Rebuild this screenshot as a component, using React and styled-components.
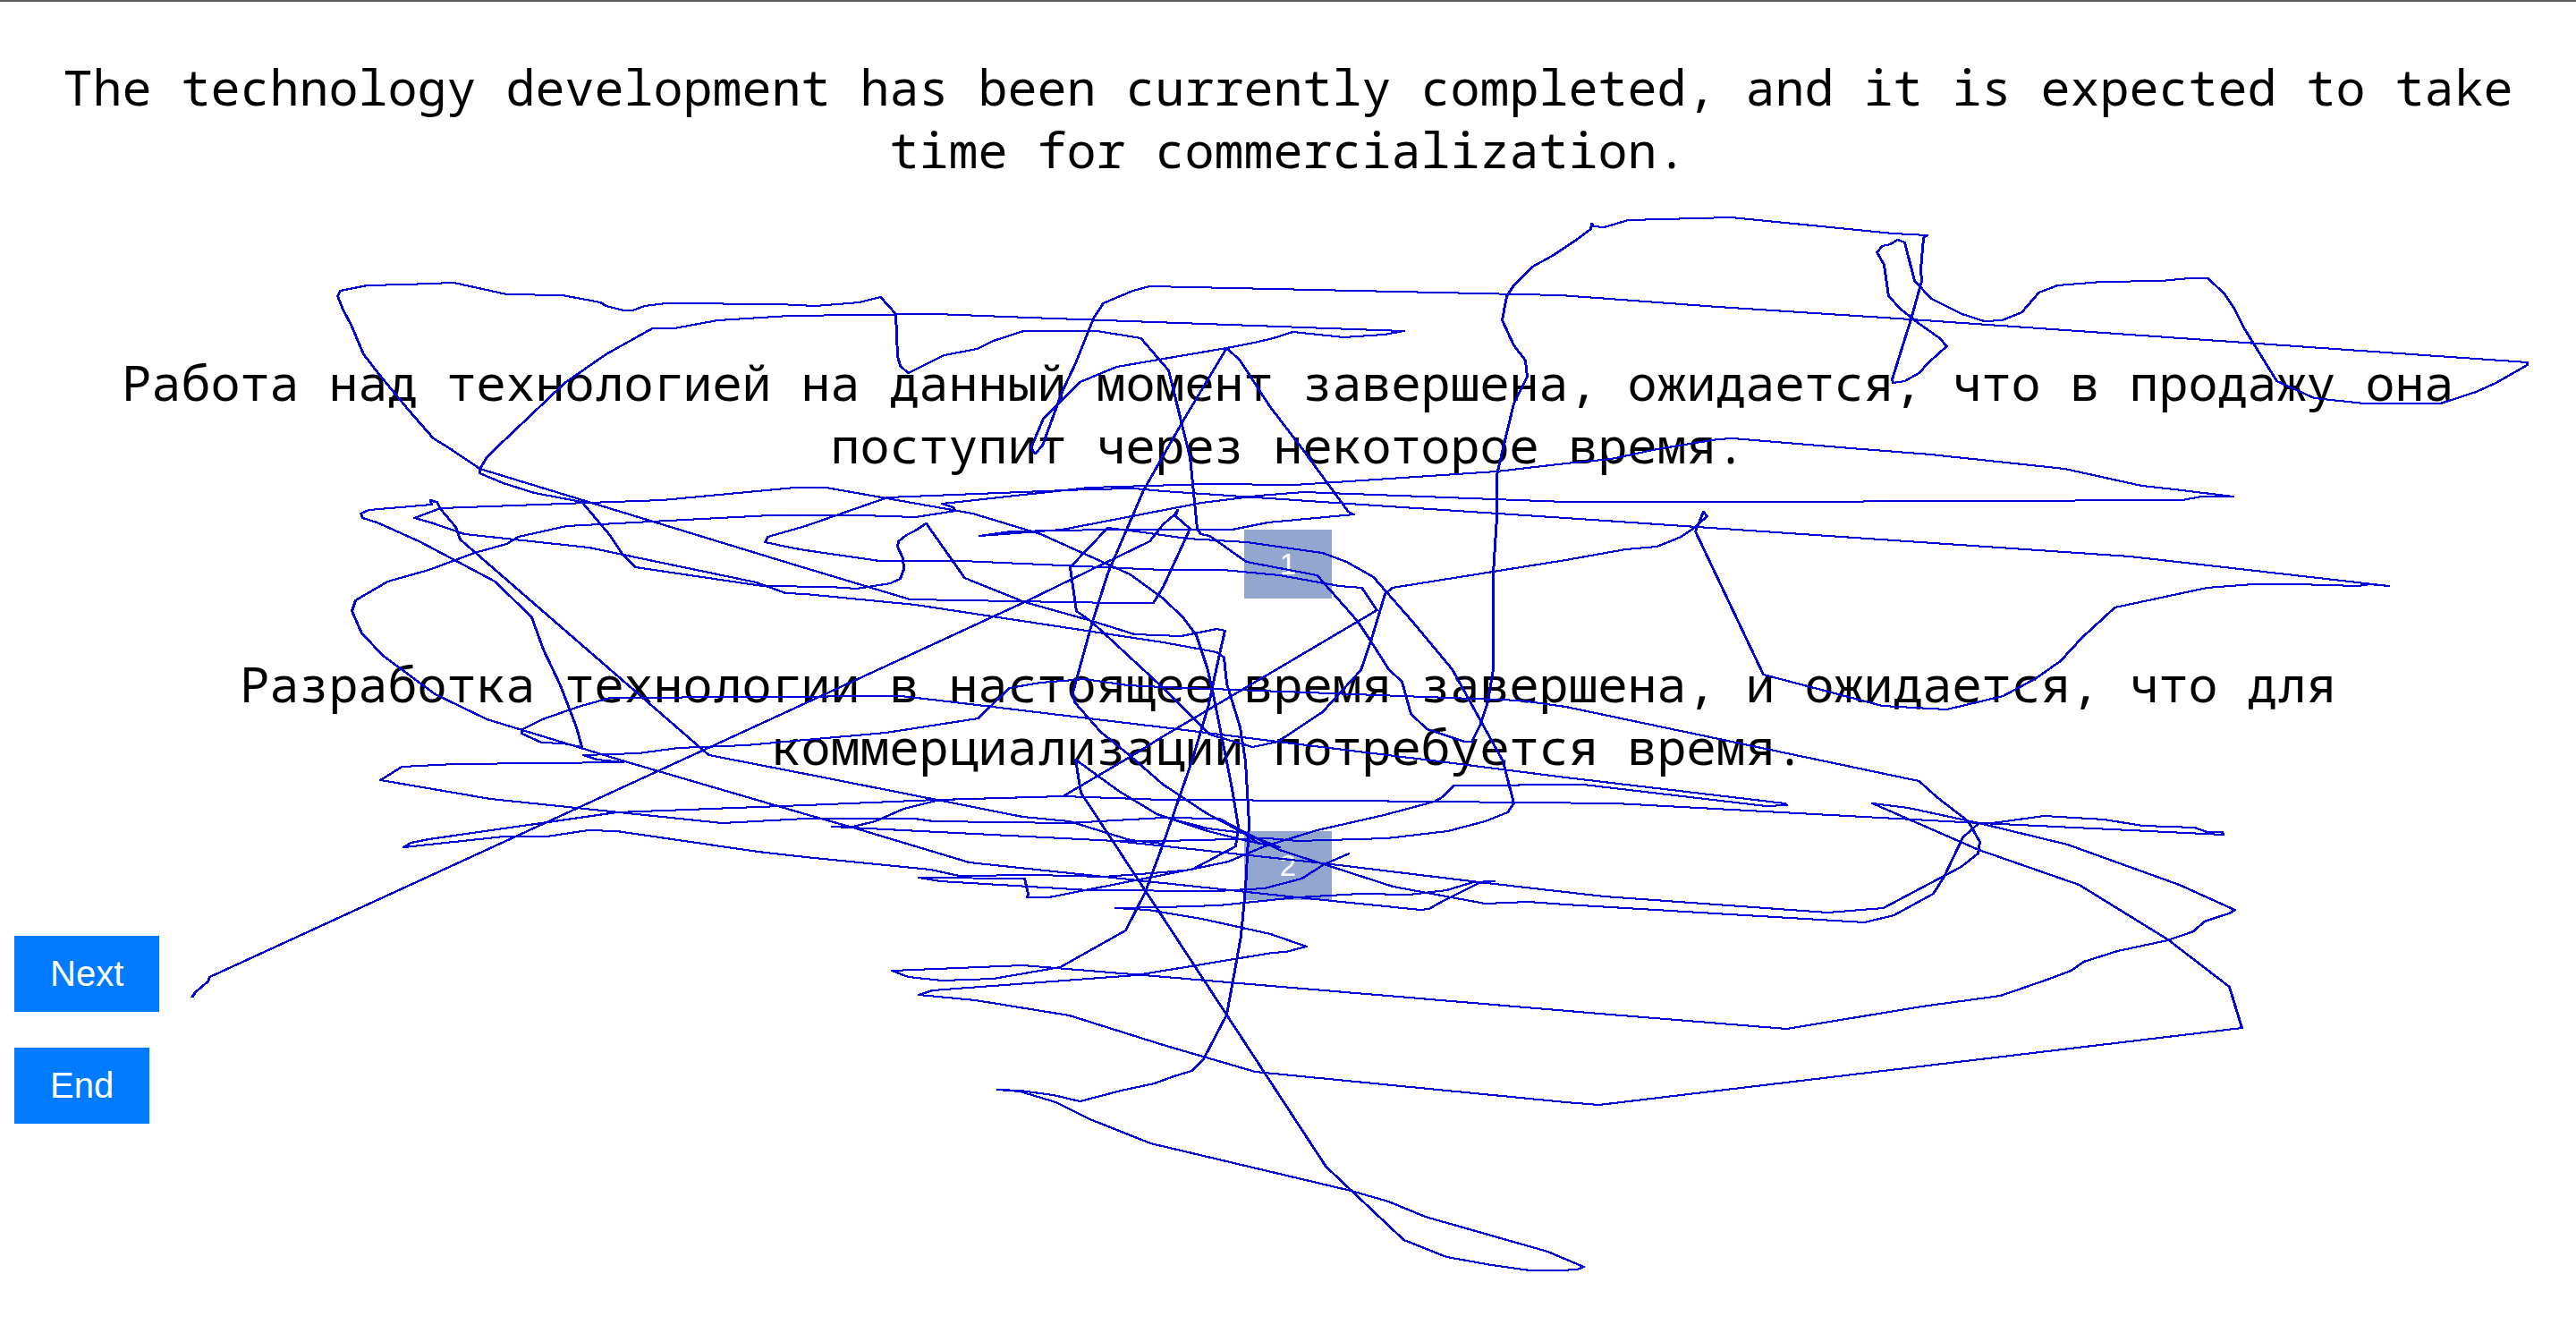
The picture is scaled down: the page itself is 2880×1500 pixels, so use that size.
import React from "react";
import styled, { createGlobalStyle } from "styled-components";

const GlobalStyle = createGlobalStyle`
  body {
    margin: 0;
    background: #fff;
  }
`;

const Page = styled.main`
  position: relative;
  min-height: 100vh;
  box-sizing: border-box;
  border-top: 2px solid #5c5a5b;
  padding: 60px 16px 40px;
  overflow: hidden;
`;

const Sentence = styled.p`
  margin: 0;
  color: #000;
  font: 55px/70px Consolas, "Noto Sans Mono", "DejaVu Sans Mono", monospace;
  text-align: center;
`;

const Options = styled.div`
  display: flex;
  flex-direction: column;
  gap: 60px;
  margin-top: 190px;
`;

const Option = styled.section`
  display: flex;
  flex-direction: column;
  align-items: center;
  gap: 60px;
`;

const Button = styled.button`
  border: 0;
  border-radius: 0;
  padding: 20px 40px;
  color: #fff;
  background: ${(p) => (p.$muted ? "#92a6cf" : "#007bff")};
  font-family: "Liberation Sans", Arial, sans-serif;
  font-size: ${(p) => (p.$muted ? 33 : 40)}px;
  line-height: ${(p) => (p.$muted ? 37 : 45)}px;
`;

const Actions = styled.div`
  display: flex;
  flex-direction: column;
  align-items: flex-start;
  gap: 40px;
  margin-top: 40px;
`;

const GazeTrace = styled.svg`
  position: absolute;
  top: -1px;
  left: 0;
  width: 100%;
  pointer-events: none;
  fill: none;
  stroke: #0000d8;
  stroke-width: 2;
  stroke-linejoin: round;
  shape-rendering: crispEdges;
`;

const traces = [
  "214,1114 218,1108 232,1096 234,1091 650,900 900,785 1145,672 1285,604 1300,585 1313,574 1316,569 1314,576 1330,590 1300,655 1289,673 1250,673 1017,669 900,634 664,562 536,523 502,500 484,489 456,457 423,417 406,395 392,362 383,345 377,330 380,324 410,318 453,317 507,315 566,328 628,329 671,337 677,341 697,346 707,346 720,341 744,338 870,339 911,341 960,337 984,331 1001,350 1003,397 1006,408 1015,416 1055,396 1092,389 1110,380 1144,369 1226,369 1275,377 1306,413 1330,510 1338,590 1342,596 1352,598 1393,627 1472,642 1517,693 1533,717 1552,747 1567,761 1577,797 1595,814 1637,828 1645,828 1655,808 1663,783 1669,747 1669,690 1669,640 1673,577 1673,530 1680,500 1692,450 1707,420 1705,402 1692,385 1679,357 1684,330 1692,318 1713,297 1735,285 1762,267 1778,255 1779,249 1781,252 1793,253 1820,245 1935,242 2116,260 2154,262 2150,265 2147,300 2148,313 2136,356 2115,423 2116,427 2129,425 2145,416 2156,404 2176,386 2168,377 2144,360 2125,345 2111,330 2106,295 2098,281 2104,274 2113,272 2121,267 2129,270 2140,313 2159,333 2193,350 2218,358 2238,357 2260,348 2279,326 2300,318 2349,314 2416,313 2447,310 2468,310 2486,327 2497,343 2508,365 2519,383 2545,425 2587,444 2643,450 2728,450 2768,437 2790,427 2825,407 2825,404 2136,356 1920,342 1744,329 1285,319 1266,324 1233,338 1222,355 1202,405 1187,437 1165,497 1157,506 1152,500 1166,467 1207,426 1248,409 1371,388 1402,382 1423,377 1445,370 1502,376 1547,373 1569,369 1150,354 1046,350 960,351 882,352 802,357 753,366 729,366 677,395 631,427 554,500 544,510 536,523 536,528 562,539 597,550 650,560 682,598 695,618 710,633 852,654 928,655 957,657 995,651 1006,646 1010,635 1009,623 1003,610 1004,604 1013,597 1023,592 1035,584 1078,645 1145,672 1220,693 1268,708 1320,710 1360,702 1369,704 1363,730 1350,790 1332,850 1300,942 1280,996 1258,1039 1185,1080 1110,1093 1053,1095 1015,1091 997,1084 1143,1078 1278,1089 1800,1133 1997,1149 2148,1124 2236,1112 2291,1093 2315,1084 2329,1074 2367,1062 2423,1050 2452,1040 2464,1029 2485,1022 2492,1020 2498,1016 2436,988 2311,943 2212,919 2184,913 2133,902 2093,897 2212,949 2324,988 2423,1049 2492,1102 2506,1148 1787,1234 1750,1231 1403,1197 1300,1167 1195,1134 1090,1117 1027,1111 1042,1106 1270,1089 1422,1064 1437,1063 1460,1057 1420,1043 1343,1026 1283,1016 1247,1014 1300,1013 1362,1011 1450,1002 1520,998 1575,999 1617,994 1647,985 1670,984 1653,986 1613,1006 1597,1015 1588,1016 1450,1002 1300,986 1083,963 953,924 900,909 698,850 544,803 486,775 428,732 404,707 393,682 397,670 433,649 479,636 530,617 566,607 579,599 633,587 861,575 963,575 1023,577 1068,570 1065,566 1053,562 1153,551 1217,544 1350,540 1447,541 1673,526 1750,517 1801,512 1852,501 1920,490 1937,489 2069,500 2158,507 2308,523 2394,542 2439,547 2496,554 2461,554 2439,558 1967,560 1750,560 1457,549 1407,553 1343,561 1187,591 1095,598 1130,593 1237,591 1377,591 1417,583 1513,574 1507,571 1455,500 1419,453 1386,402 1371,388 1323,468 1278,547 1238,640 1220,697 1199,773 1201,784 1230,817 1262,843 1300,876 1350,909 1390,930 1407,942",
  "488,560 481,558 482,563 412,569 403,573 405,578 421,583 468,604 553,649 594,689 607,725 626,765 644,812 650,834 629,830 605,829 583,819 584,814 606,803 646,789 682,779 1007,777 1067,784 1300,812 1428,828 1600,849 1750,868 1995,897 1997,899 1974,900 1770,876 1625,877 1612,890 1603,895 1547,910 1472,927 1413,945 1373,962 1330,971 1172,1002 1148,1002 1149,998 1145,981 1027,980 1051,984 1217,994 1360,995 1413,992 1455,981 1480,965 1508,953",
  "484,560 488,560 492,568 509,588 514,602 792,843 900,864 1047,893 1143,912 1195,917 1263,938 1300,942",
  "1407,942 1390,930 1363,914 1300,913 1193,919 1043,917 1022,914 900,914 807,919 548,892 425,871 449,856 508,853 606,852 696,851 667,848 652,843 713,841 758,835 834,832 900,826 990,818 1093,802 1128,768 1163,762 1212,758 1260,765 1300,767 1700,782 1750,789 2145,872 2165,890 2200,917 2213,940 2211,953 2192,968 2105,1014 2043,1019 1793,1001 1653,985 1480,964 1247,939 930,923 953,923 978,917 1010,903 1050,893 1188,889 1263,845 1300,822 1539,681 1522,656 1497,654 1430,642 1367,636 1300,636 1075,626 983,626 900,614 883,611 855,605 858,599 900,587 992,555 1217,546 1268,545 1300,548 1507,562 1750,578 2381,621 2670,654 2649,652 2636,654 2566,652 2519,652 2467,656 2364,678 2327,712 2303,738 2276,757 2239,777 2176,792 2104,788 1971,753 1895,593 1904,571 1908,576 1895,588 1879,599 1852,610 1817,613 1750,625 1556,656 1548,663 1533,713 1521,748 1478,795 1428,828 1400,834 1352,820 1300,768 1220,694 1203,682 1196,633 1238,589 1270,593 1327,601 1393,605 1478,617 1505,627 1535,644 1578,693 1623,747 1680,850 1692,897 1685,907 1660,917 1618,928 1550,936 1450,939 1417,936 1300,939 1247,939",
  "1188,889 1300,893 1500,894 1806,897 2194,918 2485,932 2484,929 2467,929 2453,924 2395,922 2352,915 2285,911 2227,919 2212,919 2194,935 2173,979 2161,998 2117,1022 2084,1030 1750,1010 1708,1007 1660,1009 1557,990 1430,949 1383,925 1363,914",
  "1188,889 1047,893 900,899 689,907 479,937 459,941 451,946 563,934 611,934 657,927 689,928 847,951 900,957 1040,971 1072,978 1157,977 1233,979 1300,974 1332,971 1381,945 1384,923 1377,881 1371,850 1355,770 1349,745 1337,709 1322,689 1300,668 1263,641 1163,596 1087,573 923,544 888,544 740,558 492,567 463,578 481,583 519,596 658,611 845,650 878,662 900,663 1023,675 1300,717 1360,728 1368,734 1371,763 1386,812 1392,850 1396,919 1392,992 1387,1045 1378,1095 1371,1133 1345,1183 1332,1196 1312,1202 1290,1210 1253,1218 1207,1230 1177,1223 1140,1218 1115,1217 1140,1219 1180,1231 1218,1250 1286,1277 1510,1330 1552,1342 1593,1359 1730,1398 1770,1415 1763,1418 1743,1419 1710,1419 1667,1413 1617,1404 1569,1385 1482,1303 1300,1025 1208,885 1202,848 1250,883 1293,909 1350,928 1390,938 1430,946 1390,930 1350,925 1300,912",
];

export default function App() {
  return (
    <>
      <GlobalStyle />
      <Page>
        <Sentence>
          The technology development has been currently completed, and it is
          expected to take time for commercialization.
        </Sentence>
        <Options>
          <Option>
            <Sentence>
              Работа над технологией на данный момент завершена, ожидается, что
              в продажу она поступит через некоторое время.
            </Sentence>
            <Button type="button" $muted>1</Button>
          </Option>
          <Option>
            <Sentence>
              Разработка технологии в настоящее время завершена, и ожидается,
              что для коммерциализации потребуется время.
            </Sentence>
            <Button type="button" $muted>2</Button>
          </Option>
        </Options>
        <Actions>
          <Button type="button">Next</Button>
          <Button type="button">End</Button>
        </Actions>
        <GazeTrace viewBox="0 0 2880 1500" aria-hidden="true">
          {traces.map((points, i) => (
            <g key={i}>
              <polyline points={points} />
              <polyline points={points} transform="translate(1 0)" />
            </g>
          ))}
        </GazeTrace>
      </Page>
    </>
  );
}
